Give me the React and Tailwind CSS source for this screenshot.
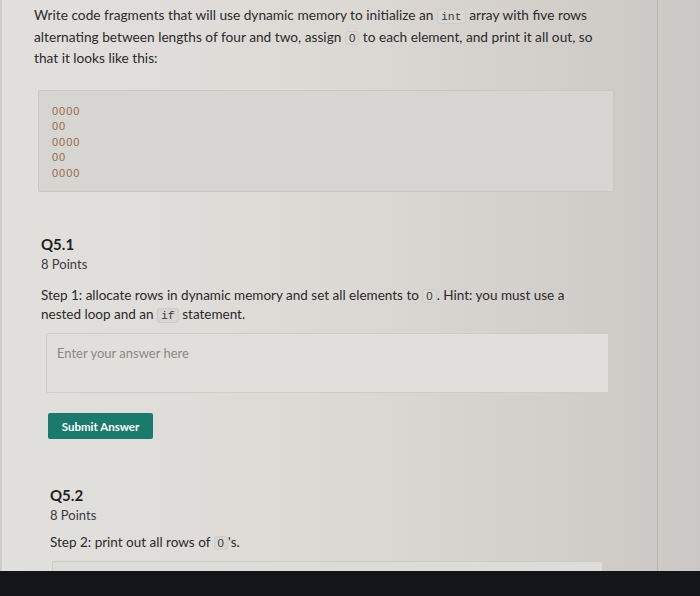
import React from 'react';

const sans = { fontFamily: 'Lato, "Open Sans", sans-serif' };

const Code = ({ children, digit }) => (
  <code
    className={
      'rounded-[3px] border border-[#cfccc8] bg-[#d9d7d3] px-[3px] text-[11.5px] leading-none text-[#3a3a3a] ' +
      (digit ? "font-['Liberation_Sans',sans-serif]" : "font-['Liberation_Mono',monospace]")
    }
  >
    {children}
  </code>
);

const Question = ({ id, points, children, className, gap = 'mt-[13px]' }) => (
  <div className={className}>
    <div className="text-[15px] font-bold leading-[20px] text-[#1f1f1f]">{id}</div>
    <div className="mt-[1px] text-[13px] leading-[18px] text-[#3b3b3b]">{points}</div>
    <div className={gap + ' text-[13.5px] leading-[18.5px] text-[#2a2a2a]'}>{children}</div>
  </div>
);

export default function App() {
  const rows = ['0000', '00', '0000', '00', '0000'];

  return (
    <div
      className="flex h-[596px] w-[700px] flex-col overflow-hidden bg-linear-to-r from-[#e2e0dd] via-[#dcd9d5] to-[#cbc7c4]"
      style={sans}
    >
      <div className="flex min-h-0 flex-1">
        <div className="w-[658px] shrink-0 border-r border-[#b9b5b1] border-l-2 border-l-[#cfccc8]">
          {/* Question text */}
          <div className="pl-[32px] pt-[4px]">
            <p className="text-[13.7px] leading-[21.5px] text-[#2b2b2b]">
              Write code fragments that will use dynamic memory to initialize an <Code>int</Code> array with five rows
              <br />
              alternating between lengths of four and two, assign <Code digit>0</Code> to each element, and print it all out, so
              <br />
              that it looks like this:
            </p>

            <div className="mt-[21px] ml-[4px] w-[576px] rounded-[2px] border border-[#cbc8c4] bg-[#d7d5d1] pb-[10px] pl-[13px] pt-[13px]">
              {rows.map((r, i) => (
                <div key={i} className="font-['Liberation_Sans',sans-serif] text-[11px] leading-[15.6px] tracking-[1px] text-[#9a6846]">
                  {r}
                </div>
              ))}
            </div>
          </div>

          {/* Q5.1 */}
          <Question id="Q5.1" points="8 Points" className="ml-[39px] mt-[42px]">
            Step 1: allocate rows in dynamic memory and set all elements to <Code digit>0</Code>. Hint: you must use a
            <br />
            nested loop and an <Code>if</Code> statement.
          </Question>

          <div className="ml-[44px] mt-[10px] h-[60px] w-[563px] rounded-[2px] border border-[#cfccc8] bg-[#e1dfdb] pl-[10px] pt-[11px] text-[13px] leading-[16px] text-[#8a8885]">
            Enter your answer here
          </div>

          <button className="ml-[46px] mt-[20px] h-[26px] w-[105px] rounded-[2px] bg-[#1a7b6d] text-[11.5px] font-bold text-white">
            Submit Answer
          </button>

          {/* Q5.2 */}
          <Question id="Q5.2" points="8 Points" className="ml-[48px] mt-[46px]" gap="mt-[9px]">
            Step 2: print out all rows of <Code digit>0</Code>'s.
          </Question>

          <div className="ml-[50px] mt-[9px] h-[40px] w-[551px] rounded-[2px] border border-[#cfccc8] bg-[#dedcd8]" />
        </div>
      </div>

      <div className="h-[25px] shrink-0 bg-[#13151b]" />
    </div>
  );
}
